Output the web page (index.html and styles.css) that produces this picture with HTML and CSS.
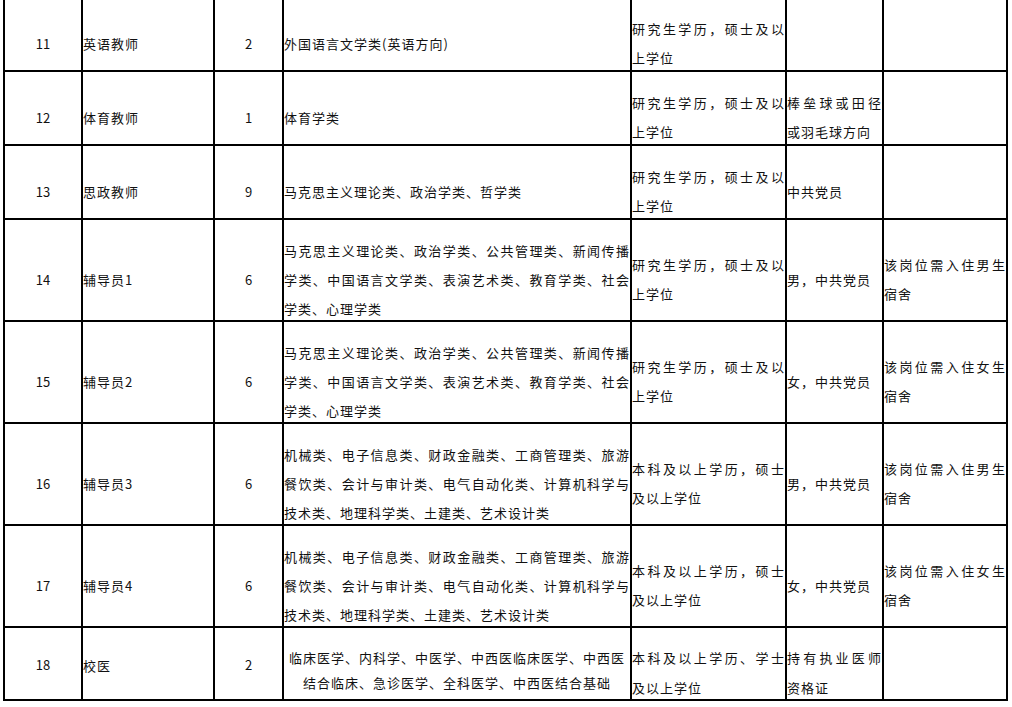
FILE: index.html
```html
<!DOCTYPE html>
<html lang="zh-CN">
<head>
<meta charset="utf-8">
<title>招聘岗位表</title>
<link rel="stylesheet" href="styles.css">
</head>
<body>
<div class="table">
  <div class="cell num">11</div>
  <div class="cell">英语教师</div>
  <div class="cell num">2</div>
  <div class="cell wrap">外国语言文学类(英语方向)</div>
  <div class="cell wrap">研究生学历，硕士及以上学位</div>
  <div class="cell wrap"></div>
  <div class="cell wrap"></div>

  <div class="cell num">12</div>
  <div class="cell">体育教师</div>
  <div class="cell num">1</div>
  <div class="cell wrap">体育学类</div>
  <div class="cell wrap">研究生学历，硕士及以上学位</div>
  <div class="cell wrap">棒垒球或田径或羽毛球方向</div>
  <div class="cell wrap"></div>

  <div class="cell num">13</div>
  <div class="cell">思政教师</div>
  <div class="cell num">9</div>
  <div class="cell wrap">马克思主义理论类、政治学类、哲学类</div>
  <div class="cell wrap">研究生学历，硕士及以上学位</div>
  <div class="cell wrap">中共党员</div>
  <div class="cell wrap"></div>

  <div class="cell num">14</div>
  <div class="cell">辅导员1</div>
  <div class="cell num">6</div>
  <div class="cell wrap">马克思主义理论类、政治学类、公共管理类、新闻传播学类、中国语言文学类、表演艺术类、教育学类、社会学类、心理学类</div>
  <div class="cell wrap">研究生学历，硕士及以上学位</div>
  <div class="cell wrap">男，中共党员</div>
  <div class="cell wrap">该岗位需入住男生宿舍</div>

  <div class="cell num">15</div>
  <div class="cell">辅导员2</div>
  <div class="cell num">6</div>
  <div class="cell wrap">马克思主义理论类、政治学类、公共管理类、新闻传播学类、中国语言文学类、表演艺术类、教育学类、社会学类、心理学类</div>
  <div class="cell wrap">研究生学历，硕士及以上学位</div>
  <div class="cell wrap">女，中共党员</div>
  <div class="cell wrap">该岗位需入住女生宿舍</div>

  <div class="cell num">16</div>
  <div class="cell">辅导员3</div>
  <div class="cell num">6</div>
  <div class="cell wrap">机械类、电子信息类、财政金融类、工商管理类、旅游餐饮类、会计与审计类、电气自动化类、计算机科学与技术类、地理科学类、土建类、艺术设计类</div>
  <div class="cell wrap">本科及以上学历，硕士及以上学位</div>
  <div class="cell wrap">男，中共党员</div>
  <div class="cell wrap">该岗位需入住男生宿舍</div>

  <div class="cell num">17</div>
  <div class="cell">辅导员4</div>
  <div class="cell num">6</div>
  <div class="cell wrap">机械类、电子信息类、财政金融类、工商管理类、旅游餐饮类、会计与审计类、电气自动化类、计算机科学与技术类、地理科学类、土建类、艺术设计类</div>
  <div class="cell wrap">本科及以上学历，硕士及以上学位</div>
  <div class="cell wrap">女，中共党员</div>
  <div class="cell wrap">该岗位需入住女生宿舍</div>

  <div class="cell num last-top">18</div>
  <div class="cell last-name">校医</div>
  <div class="cell num last-top">2</div>
  <div class="cell wrap centered last-major">临床医学、内科学、中医学、中西医临床医学、中西医结合临床、急诊医学、全科医学、中西医结合基础</div>
  <div class="cell wrap last-req">本科及以上学历、学士及以上学位</div>
  <div class="cell wrap last-req">持有执业医师资格证</div>
  <div class="cell wrap last-req"></div>
</div>
</body>
</html>
```

FILE: styles.css
```css
html, body {
  margin: 0;
  padding: 0;
  background: #ffffff;
}

body {
  font-family: "Noto Sans CJK SC", "Liberation Sans", sans-serif;
  font-size: 13px;
  color: #111111;
  overflow: hidden;
}

.table {
  display: grid;
  grid-template-columns: 76px 130px 67px 346px 153px 95px 122px;
  grid-template-rows: 72px 72px 72px 100px 100px 100px 100px 71px;
  gap: 2px;
  padding: 2px;
  width: 1005px;
  box-sizing: border-box;
  margin: -4px 0 0 3px;
  background: #000000;
}

.cell {
  background: #ffffff;
  display: flex;
  align-items: center;
  box-sizing: border-box;
  padding-top: 18px;
  line-height: 29px;
  letter-spacing: 1px;
}

.num {
  justify-content: center;
  letter-spacing: 0;
}

.wrap {
  text-align: justify;
}

.centered {
  text-align: center;
  justify-content: center;
}

.last-top {
  padding-top: 1px;
}

.last-name {
  padding-top: 3px;
}

.last-major {
  padding-top: 13px;
  line-height: 25px;
}

.last-req {
  padding-top: 18px;
  line-height: 30px;
}
```
